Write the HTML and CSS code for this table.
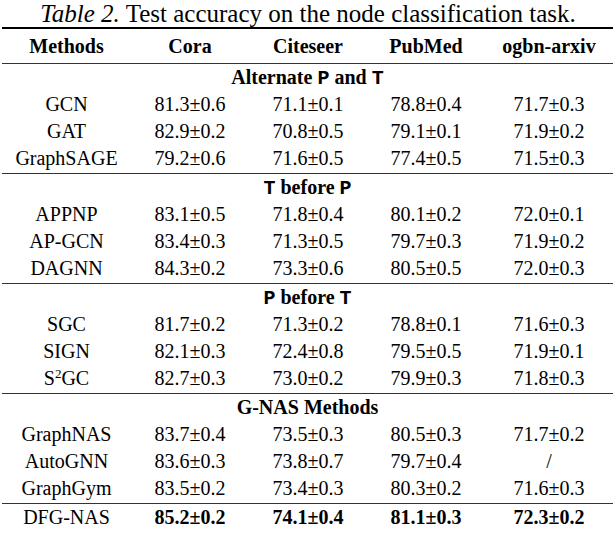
FILE: index.html
```html
<!DOCTYPE html>
<html>
<head>
<meta charset="utf-8">
<link rel="stylesheet" href="styles.css">
</head>
<body>
<div class="page">
  <p class="caption"><i>Table 2.</i> Test accuracy on the node classification task.</p>
  <div class="table">
    <div class="row head rule-top-thick">
      <div>Methods</div><div>Cora</div><div>Citeseer</div><div>PubMed</div><div>ogbn-arxiv</div>
    </div>
    <div class="section rule-top">Alternate <span class="tt">P</span> and <span class="tt">T</span></div>
    <div class="row"><div>GCN</div><div>81.3±0.6</div><div>71.1±0.1</div><div>78.8±0.4</div><div>71.7±0.3</div></div>
    <div class="row"><div>GAT</div><div>82.9±0.2</div><div>70.8±0.5</div><div>79.1±0.1</div><div>71.9±0.2</div></div>
    <div class="row"><div>GraphSAGE</div><div>79.2±0.6</div><div>71.6±0.5</div><div>77.4±0.5</div><div>71.5±0.3</div></div>

    <div class="section rule-top"><span class="tt">T</span> before <span class="tt">P</span></div>
    <div class="row"><div>APPNP</div><div>83.1±0.5</div><div>71.8±0.4</div><div>80.1±0.2</div><div>72.0±0.1</div></div>
    <div class="row"><div>AP-GCN</div><div>83.4±0.3</div><div>71.3±0.5</div><div>79.7±0.3</div><div>71.9±0.2</div></div>
    <div class="row"><div>DAGNN</div><div>84.3±0.2</div><div>73.3±0.6</div><div>80.5±0.5</div><div>72.0±0.3</div></div>

    <div class="section rule-top"><span class="tt">P</span> before <span class="tt">T</span></div>
    <div class="row"><div>SGC</div><div>81.7±0.2</div><div>71.3±0.2</div><div>78.8±0.1</div><div>71.6±0.3</div></div>
    <div class="row"><div>SIGN</div><div>82.1±0.3</div><div>72.4±0.8</div><div>79.5±0.5</div><div>71.9±0.1</div></div>
    <div class="row"><div>S<sup>2</sup>GC</div><div>82.7±0.3</div><div>73.0±0.2</div><div>79.9±0.3</div><div>71.8±0.3</div></div>

    <div class="section rule-top">G-NAS Methods</div>
    <div class="row"><div>GraphNAS</div><div>83.7±0.4</div><div>73.5±0.3</div><div>80.5±0.3</div><div>71.7±0.2</div></div>
    <div class="row"><div>AutoGNN</div><div>83.6±0.3</div><div>73.8±0.7</div><div>79.7±0.4</div><div>/</div></div>
    <div class="row"><div>GraphGym</div><div>83.5±0.2</div><div>73.4±0.3</div><div>80.3±0.2</div><div>71.6±0.3</div></div>

    <div class="row last rule-top"><div>DFG-NAS</div><div class="b">85.2±0.2</div><div class="b">74.1±0.4</div><div class="b">81.1±0.3</div><div class="b">72.3±0.2</div></div>
  </div>
</div>
</body>
</html>
```

FILE: styles.css
```css
html, body {
  margin: 0;
  padding: 0;
  background: #fff;
}
.page {
  width: 614px;
  height: 534px;
  overflow: hidden;
  font-family: "Liberation Serif", "Times New Roman", serif;
  font-size: 20px;
  color: #000;
}
.caption {
  margin: 0;
  height: 27px;
  font-size: 25px;
  line-height: 27px;
  text-align: center;
  padding-left: 2px;
  white-space: nowrap;
}
.table {
  margin-left: 2px;
  width: 611px;
  border-bottom: 2px solid #000;
}
.row {
  display: grid;
  grid-template-columns: 129px 118px 118px 118px 128px;
  height: 27px;
  line-height: 24px;
}
.row > div {
  text-align: center;
  white-space: nowrap;
}
.head {
  height: 34px;
  line-height: 34px;
  font-weight: bold;
}
.rule-top-thick {
  border-top: 2px solid #000;
}
.rule-top {
  border-top: 1px solid #333;
}
.section {
  height: 28px;
  line-height: 26px;
  text-align: center;
  font-weight: bold;
}
.tt {
  font-family: "Liberation Mono", "Courier New", monospace;
  font-weight: bold;
}
.last {
  height: 31px;
  line-height: 26px;
}
.b {
  font-weight: bold;
}
sup {
  font-size: 13px;
  line-height: 0;
  vertical-align: 7px;
}
```
